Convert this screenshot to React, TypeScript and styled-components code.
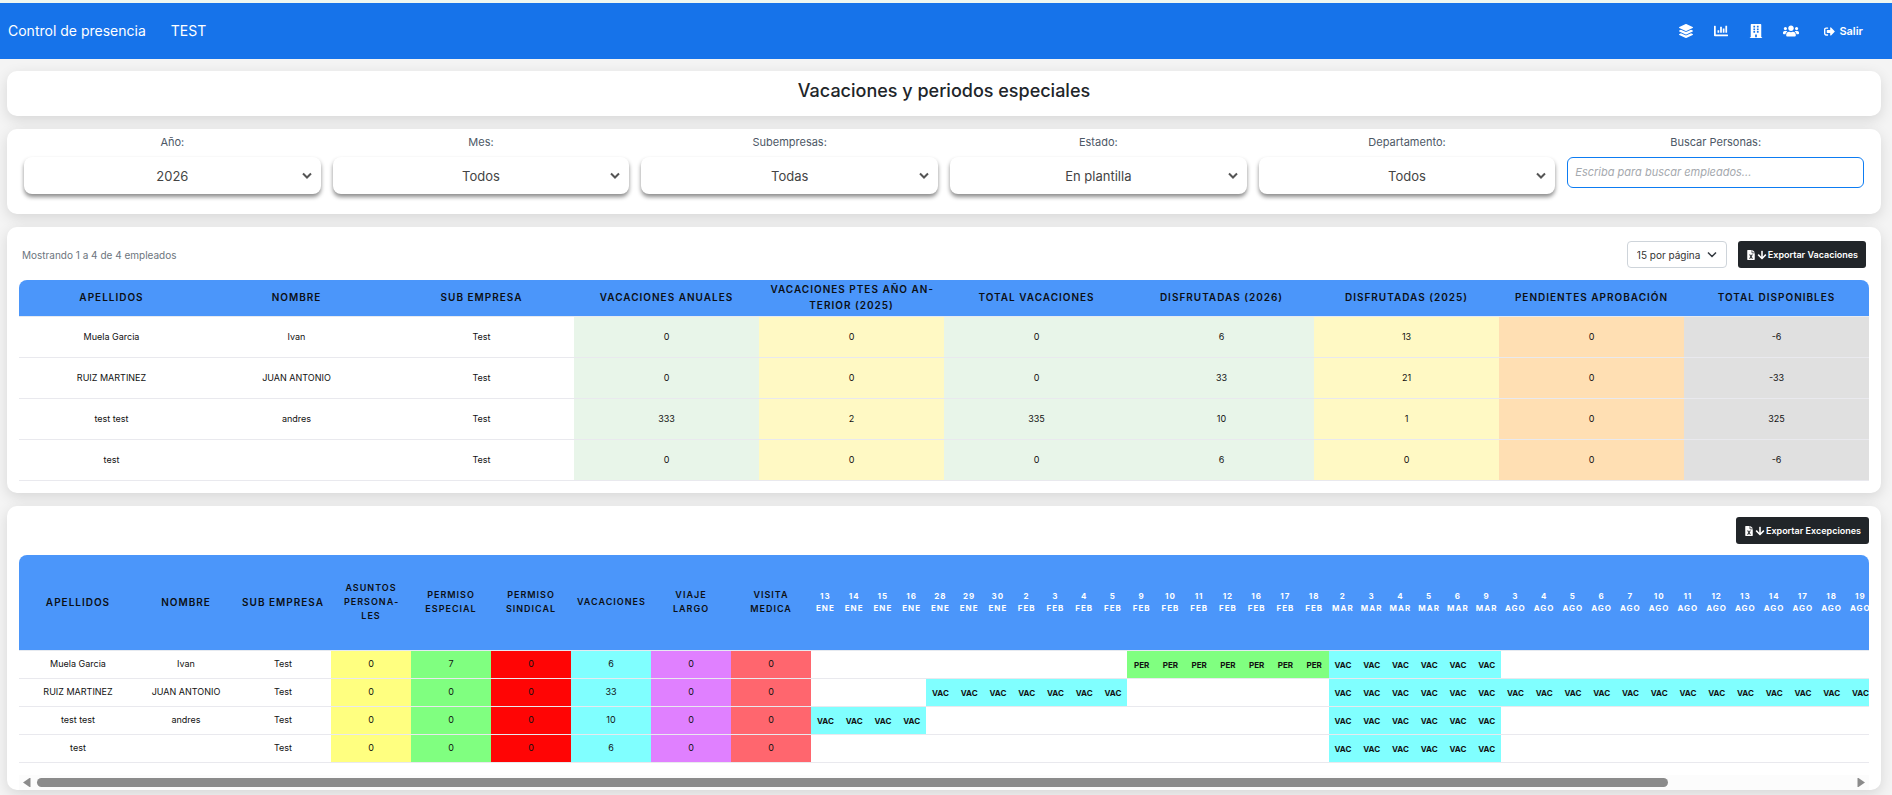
import React, { useEffect, useRef, useState } from "react";
import styled, { createGlobalStyle } from "styled-components";
import {
  FaArrowDown,
  FaBuilding,
  FaChartBar,
  FaFileExcel,
  FaLayerGroup,
  FaSignOutAlt,
  FaUsers,
} from "react-icons/fa";

const GlobalStyle = createGlobalStyle`
  *, *::before, *::after { box-sizing: border-box; }
  body {
    margin: 0;
    background: #f4f4f4;
    color: #212529;
    font-family: Inter, "Liberation Sans", sans-serif;
    font-size: 12px;
    overflow-x: hidden;
  }
  button, input, select { font-family: inherit; }
`;

const Navbar = styled.header`
  display: flex;
  align-items: center;
  justify-content: space-between;
  height: 59px;
  padding: 0 29px 0 8px;
  border-top: 3px solid #eef7f1;
  background: #1673ea;
  color: #fff;
`;

const Brand = styled.div`
  display: flex;
  gap: 25px;
  font-size: 14px;
  line-height: 20px;
`;

const NavLink = styled.a`
  display: flex;
  align-items: center;
  color: #fff;
  text-decoration: none;
`;

const NavIcons = styled.nav`
  display: flex;
  align-items: center;
  gap: 20px;
  font-size: 14px;

  & > a {
    justify-content: center;
    min-width: 15px;
  }
`;

const ExitLink = styled(NavLink)`
  gap: 4px;
  margin-left: 5px;
  font-size: 11px;
  font-weight: 600;
`;

const Page = styled.main`
  display: flex;
  flex-direction: column;
  gap: 13px;
  padding: 12px 11px 5px 7px;
`;

const Card = styled.section`
  border-radius: 10px;
  background: #fff;
  box-shadow: 0 4px 14px rgba(0, 0, 0, 0.12);
`;

const TitleCard = styled(Card)`
  padding: 8px 16px 13px;
`;

const Title = styled.h1`
  margin: 0;
  font-size: 18px;
  line-height: 24px;
  font-weight: 500;
  text-align: center;
`;

const FilterCard = styled(Card)`
  display: grid;
  grid-template-columns: repeat(6, 1fr);
  gap: 12px;
  padding: 4px 17px 20px;
`;

const Field = styled.div`
  display: flex;
  flex-direction: column;
  gap: 6px;
`;

const FieldLabel = styled.label`
  color: #4d5866;
  font-size: 11px;
  line-height: 18px;
  text-align: center;
`;

const SelectWrap = styled.div`
  position: relative;
  display: flex;
`;

const FilterSelect = styled.select`
  flex: 1;
  min-width: 0;
  height: 37px;
  border: 0;
  border-radius: 8px;
  background: #fff;
  box-shadow: 0 3px 4px rgba(0, 0, 0, 0.45);
  color: #444;
  font-size: 13px;
  text-align: center;
  text-align-last: center;
  appearance: none;
`;

const SelectArrow = styled.svg<{ $right: number }>`
  position: absolute;
  top: 0;
  bottom: 0;
  right: ${(p) => p.$right}px;
  height: 100%;
  pointer-events: none;
`;

const SearchInput = styled.input`
  height: 31px;
  padding: 0 7px 2px;
  border: 1px solid #0d7cf2;
  border-radius: 6px;
  outline: 0;
  font-size: 11px;

  &::placeholder {
    color: #a5a9ae;
    font-style: italic;
    opacity: 1;
  }
`;

const TableCard = styled(Card)`
  padding: 14px 12px 12px;
`;

const ExceptionsCard = styled(Card)`
  padding: 11px 12px 0;
`;

const Toolbar = styled.div`
  display: flex;
  align-items: center;
  justify-content: flex-end;
  gap: 11px;
  margin-bottom: 11px;
`;

const SummaryBar = styled(Toolbar)`
  margin-bottom: 12px;
  padding: 0 3px;
`;

const Summary = styled.span`
  flex: 1;
  color: #6c757d;
  font-size: 10px;
`;

const PageSize = styled.select`
  width: 100px;
  height: 27px;
  padding: 0 0 0 9px;
  border: 1px solid #ced4da;
  border-radius: 4px;
  background: #fff;
  color: #333;
  font-size: 10px;
  appearance: none;
`;

const ExportButton = styled.button`
  display: flex;
  align-items: center;
  gap: 1px;
  height: 27px;
  padding: 0 8px;
  border: 0;
  border-radius: 3px;
  background: #212529;
  color: #fff;
  font-size: 9px;
  font-weight: 600;

  & > svg {
    font-size: 10px;
  }
`;

const Scroller = styled.div`
  overflow: hidden;
  border-radius: 8px 8px 0 0;
`;

const DataTable = styled.table<{ $width: string }>`
  width: ${(p) => p.$width};
  border-collapse: separate;
  border-spacing: 0;
  table-layout: fixed;
`;

const HeadCell = styled.th`
  padding: 0 8px 2px;
  border-bottom: 1px solid #e6eaf0;
  background: #4b96fa;
  color: #0b0f14;
  font-size: 10px;
  line-height: 16px;
  font-weight: 600;
  letter-spacing: 1px;
`;

const SummaryHead = styled(HeadCell)`
  height: 37px;
`;

const ExceptionHead = styled(HeadCell)<{ $small?: boolean }>`
  height: 96px;
  padding: 0 ${(p) => (p.$small ? 6 : 2)}px 2px;
  font-size: ${(p) => (p.$small ? 9 : 10)}px;
  line-height: 14px;
`;

const DateHead = styled(ExceptionHead)`
  padding: 0 0 2px;
  color: #fff;
  font-size: 8px;
  line-height: 12px;
  font-weight: 700;
`;

const Cell = styled.td<{ $bg?: string; $tall?: boolean }>`
  height: ${(p) => (p.$tall ? 41 : 28)}px;
  padding: 0 2px 2px;
  border-bottom: 1px solid #e9e9ee;
  background: ${(p) => p.$bg ?? "#fff"};
  background-clip: padding-box;
  color: #111;
  font-size: 9px;
  text-align: center;
`;

const DateCell = styled(Cell)`
  padding: 0;
  font-size: 8px;
  font-weight: 700;
`;

const ScrollBar = styled.div`
  display: flex;
  align-items: center;
  gap: 6px;
  height: 15px;
  margin-top: 12px;
  padding: 0 4px;
  background: #fcfcfc;
`;

const ScrollButton = styled.button`
  display: flex;
  padding: 0;
  border: 0;
  background: none;
`;

const ScrollTrack = styled.div`
  flex: 1;
`;

const ScrollThumb = styled.div`
  height: 9px;
  border-radius: 5px;
  background: #8b8b8b;
`;

const filters = [
  { id: "anio", label: "Año:", value: "2026" },
  { id: "mes", label: "Mes:", value: "Todos" },
  { id: "subempresas", label: "Subempresas:", value: "Todas" },
  { id: "estado", label: "Estado:", value: "En plantilla" },
  { id: "departamento", label: "Departamento:", value: "Todos" },
];

const GREEN = "#e8f5e9";
const YELLOW = "#fff9c4";
const ORANGE = "#ffdfb3";
const GREY = "#e0e0e0";

const summaryColumns: { title: string; bg?: string }[] = [
  { title: "APELLIDOS" },
  { title: "NOMBRE" },
  { title: "SUB EMPRESA" },
  { title: "VACACIONES ANUALES", bg: GREEN },
  { title: "VACACIONES PTES AÑO AN\u00adTERIOR (2025)", bg: YELLOW },
  { title: "TOTAL VACACIONES", bg: GREEN },
  { title: "DISFRUTADAS (2026)", bg: GREEN },
  { title: "DISFRUTADAS (2025)", bg: YELLOW },
  { title: "PENDIENTES APROBACIÓN", bg: ORANGE },
  { title: "TOTAL DISPONIBLES", bg: GREY },
];

const summaryRows = [
  ["Muela Garcia", "Ivan", "Test", "0", "0", "0", "6", "13", "0", "-6"],
  ["RUIZ MARTINEZ", "JUAN ANTONIO", "Test", "0", "0", "0", "33", "21", "0", "-33"],
  ["test test", "andres", "Test", "333", "2", "335", "10", "1", "0", "325"],
  ["test", "", "Test", "0", "0", "0", "6", "0", "0", "-6"],
];

const exceptionColumns: { title: string; width: number; bg?: string }[] = [
  { title: "APELLIDOS", width: 118 },
  { title: "NOMBRE", width: 98 },
  { title: "SUB EMPRESA", width: 96 },
  { title: "ASUNTOS PERSONA\u00adLES", width: 80, bg: "#ffff80" },
  { title: "PERMISO ESPECIAL", width: 80, bg: "#80ff80" },
  { title: "PERMISO SINDICAL", width: 80, bg: "#ff0505" },
  { title: "VACACIONES", width: 80, bg: "#80ffff" },
  { title: "VIAJE LARGO", width: 80, bg: "#e080ff" },
  { title: "VISITA MEDICA", width: 80, bg: "#ff666e" },
];

const months: [string, number[]][] = [
  ["ENE", [13, 14, 15, 16, 28, 29, 30]],
  ["FEB", [2, 3, 4, 5, 9, 10, 11, 12, 16, 17, 18]],
  ["MAR", [2, 3, 4, 5, 6, 9]],
  ["AGO", [3, 4, 5, 6, 7, 10, 11, 12, 13, 14, 17, 18, 19, 20, 21, 24, 25, 26, 27, 28]],
];
const dates = months.flatMap(([month, days]) => days.map((day) => ({ day, month })));

// Each span is [first date column, end column (exclusive), code].
type Span = [number, number, "VAC" | "PER"];
const exceptionRows: { cells: string[]; spans: Span[] }[] = [
  {
    cells: ["Muela Garcia", "Ivan", "Test", "0", "7", "0", "6", "0", "0"],
    spans: [[11, 18, "PER"], [18, 24, "VAC"]],
  },
  {
    cells: ["RUIZ MARTINEZ", "JUAN ANTONIO", "Test", "0", "0", "0", "33", "0", "0"],
    spans: [[4, 11, "VAC"], [18, 44, "VAC"]],
  },
  {
    cells: ["test test", "andres", "Test", "0", "0", "0", "10", "0", "0"],
    spans: [[0, 4, "VAC"], [18, 24, "VAC"]],
  },
  {
    cells: ["test", "", "Test", "0", "0", "0", "6", "0", "0"],
    spans: [[18, 24, "VAC"]],
  },
];

const codeColors = { VAC: "#80ffff", PER: "#80ff80" };

function Chevron({ right, thin }: { right: number; thin?: boolean }) {
  return (
    <SelectArrow $right={right} width="10" viewBox="0 0 10 10" fill="none" aria-hidden="true">
      <path d="M1 3 L5 7 L9 3" stroke={thin ? "#343a40" : "#555"} strokeWidth={thin ? 1.5 : 2} />
    </SelectArrow>
  );
}

function ExceptionsTable() {
  const scroller = useRef<HTMLDivElement>(null);
  const [view, setView] = useState({ size: 0.9, start: 0 });

  const update = () => {
    const el = scroller.current;
    if (el) setView({ size: el.clientWidth / el.scrollWidth, start: el.scrollLeft / el.scrollWidth });
  };

  useEffect(() => {
    update();
    window.addEventListener("resize", update);
    return () => window.removeEventListener("resize", update);
  }, []);

  const scrollBy = (left: number) => scroller.current?.scrollBy({ left });

  return (
    <>
      <Scroller ref={scroller} onScroll={update}>
        <DataTable $width="2057px">
          <colgroup>
            {exceptionColumns.map((c) => (
              <col key={c.title} width={c.width} />
            ))}
            {dates.map((d) => (
              <col key={d.month + d.day} />
            ))}
          </colgroup>
          <thead>
            <tr>
              {exceptionColumns.map((c) => (
                <ExceptionHead key={c.title} $small={!!c.bg}>
                  {c.title}
                </ExceptionHead>
              ))}
              {dates.map((d) => (
                <DateHead key={d.month + d.day}>
                  {d.day}
                  <br />
                  {d.month}
                </DateHead>
              ))}
            </tr>
          </thead>
          <tbody>
            {exceptionRows.map((row) => (
              <tr key={row.cells[0]}>
                {row.cells.map((value, i) => (
                  <Cell key={i} $bg={exceptionColumns[i].bg}>
                    {value}
                  </Cell>
                ))}
                {dates.map((d, i) => {
                  const code = row.spans.find(([from, to]) => i >= from && i < to)?.[2];
                  return (
                    <DateCell key={d.month + d.day} $bg={code && codeColors[code]}>
                      {code}
                    </DateCell>
                  );
                })}
              </tr>
            ))}
          </tbody>
        </DataTable>
      </Scroller>
      <ScrollBar>
        <ScrollButton type="button" aria-label="Desplazar a la izquierda" onClick={() => scrollBy(-80)}>
          <svg width="8" height="9" viewBox="0 0 8 9" aria-hidden="true">
            <path d="M7.5 0 V9 H6.5 L0 4.5 L6.5 0 Z" fill="#8b8b8b" />
          </svg>
        </ScrollButton>
        <ScrollTrack>
          <ScrollThumb style={{ width: `${view.size * 100}%`, marginLeft: `${view.start * 100}%` }} />
        </ScrollTrack>
        <ScrollButton type="button" aria-label="Desplazar a la derecha" onClick={() => scrollBy(80)}>
          <svg width="8" height="9" viewBox="0 0 8 9" aria-hidden="true">
            <path d="M0.5 0 V9 H1.5 L8 4.5 L1.5 0 Z" fill="#8b8b8b" />
          </svg>
        </ScrollButton>
      </ScrollBar>
    </>
  );
}

export default function App() {
  return (
    <>
      <GlobalStyle />
      <Navbar>
        <Brand>
          <NavLink href="#">Control de presencia</NavLink>
          <NavLink href="#">TEST</NavLink>
        </Brand>
        <NavIcons>
          <NavLink href="#" aria-label="Capas"><FaLayerGroup /></NavLink>
          <NavLink href="#" aria-label="Informes"><FaChartBar /></NavLink>
          <NavLink href="#" aria-label="Empresa"><FaBuilding /></NavLink>
          <NavLink href="#" aria-label="Empleados"><FaUsers size={16} /></NavLink>
          <ExitLink href="#">
            <FaSignOutAlt />
            Salir
          </ExitLink>
        </NavIcons>
      </Navbar>
      <Page>
        <TitleCard>
          <Title>Vacaciones y periodos especiales</Title>
        </TitleCard>

        <FilterCard>
          {filters.map((f) => (
            <Field key={f.id}>
              <FieldLabel htmlFor={f.id}>{f.label}</FieldLabel>
              <SelectWrap>
                <FilterSelect id={f.id} defaultValue={f.value}>
                  <option>{f.value}</option>
                </FilterSelect>
                <Chevron right={9} />
              </SelectWrap>
            </Field>
          ))}
          <Field>
            <FieldLabel htmlFor="buscar">Buscar Personas:</FieldLabel>
            <SearchInput id="buscar" type="text" placeholder="Escriba para buscar empleados..." />
          </Field>
        </FilterCard>

        <TableCard>
          <SummaryBar>
            <Summary>Mostrando 1 a 4 de 4 empleados</Summary>
            <SelectWrap>
              <PageSize aria-label="Empleados por página" defaultValue="15 por página">
                <option>15 por página</option>
              </PageSize>
              <Chevron right={10} thin />
            </SelectWrap>
            <ExportButton type="button">
              <FaFileExcel />
              <FaArrowDown />
              Exportar Vacaciones
            </ExportButton>
          </SummaryBar>
          <Scroller>
            <DataTable $width="100%">
              <thead>
                <tr>
                  {summaryColumns.map((c) => (
                    <SummaryHead key={c.title}>{c.title}</SummaryHead>
                  ))}
                </tr>
              </thead>
              <tbody>
                {summaryRows.map((row) => (
                  <tr key={row[0]}>
                    {row.map((value, i) => (
                      <Cell key={i} $tall $bg={summaryColumns[i].bg}>
                        {value}
                      </Cell>
                    ))}
                  </tr>
                ))}
              </tbody>
            </DataTable>
          </Scroller>
        </TableCard>

        <ExceptionsCard>
          <Toolbar>
            <ExportButton type="button">
              <FaFileExcel />
              <FaArrowDown />
              Exportar Excepciones
            </ExportButton>
          </Toolbar>
          <ExceptionsTable />
        </ExceptionsCard>
      </Page>
    </>
  );
}
